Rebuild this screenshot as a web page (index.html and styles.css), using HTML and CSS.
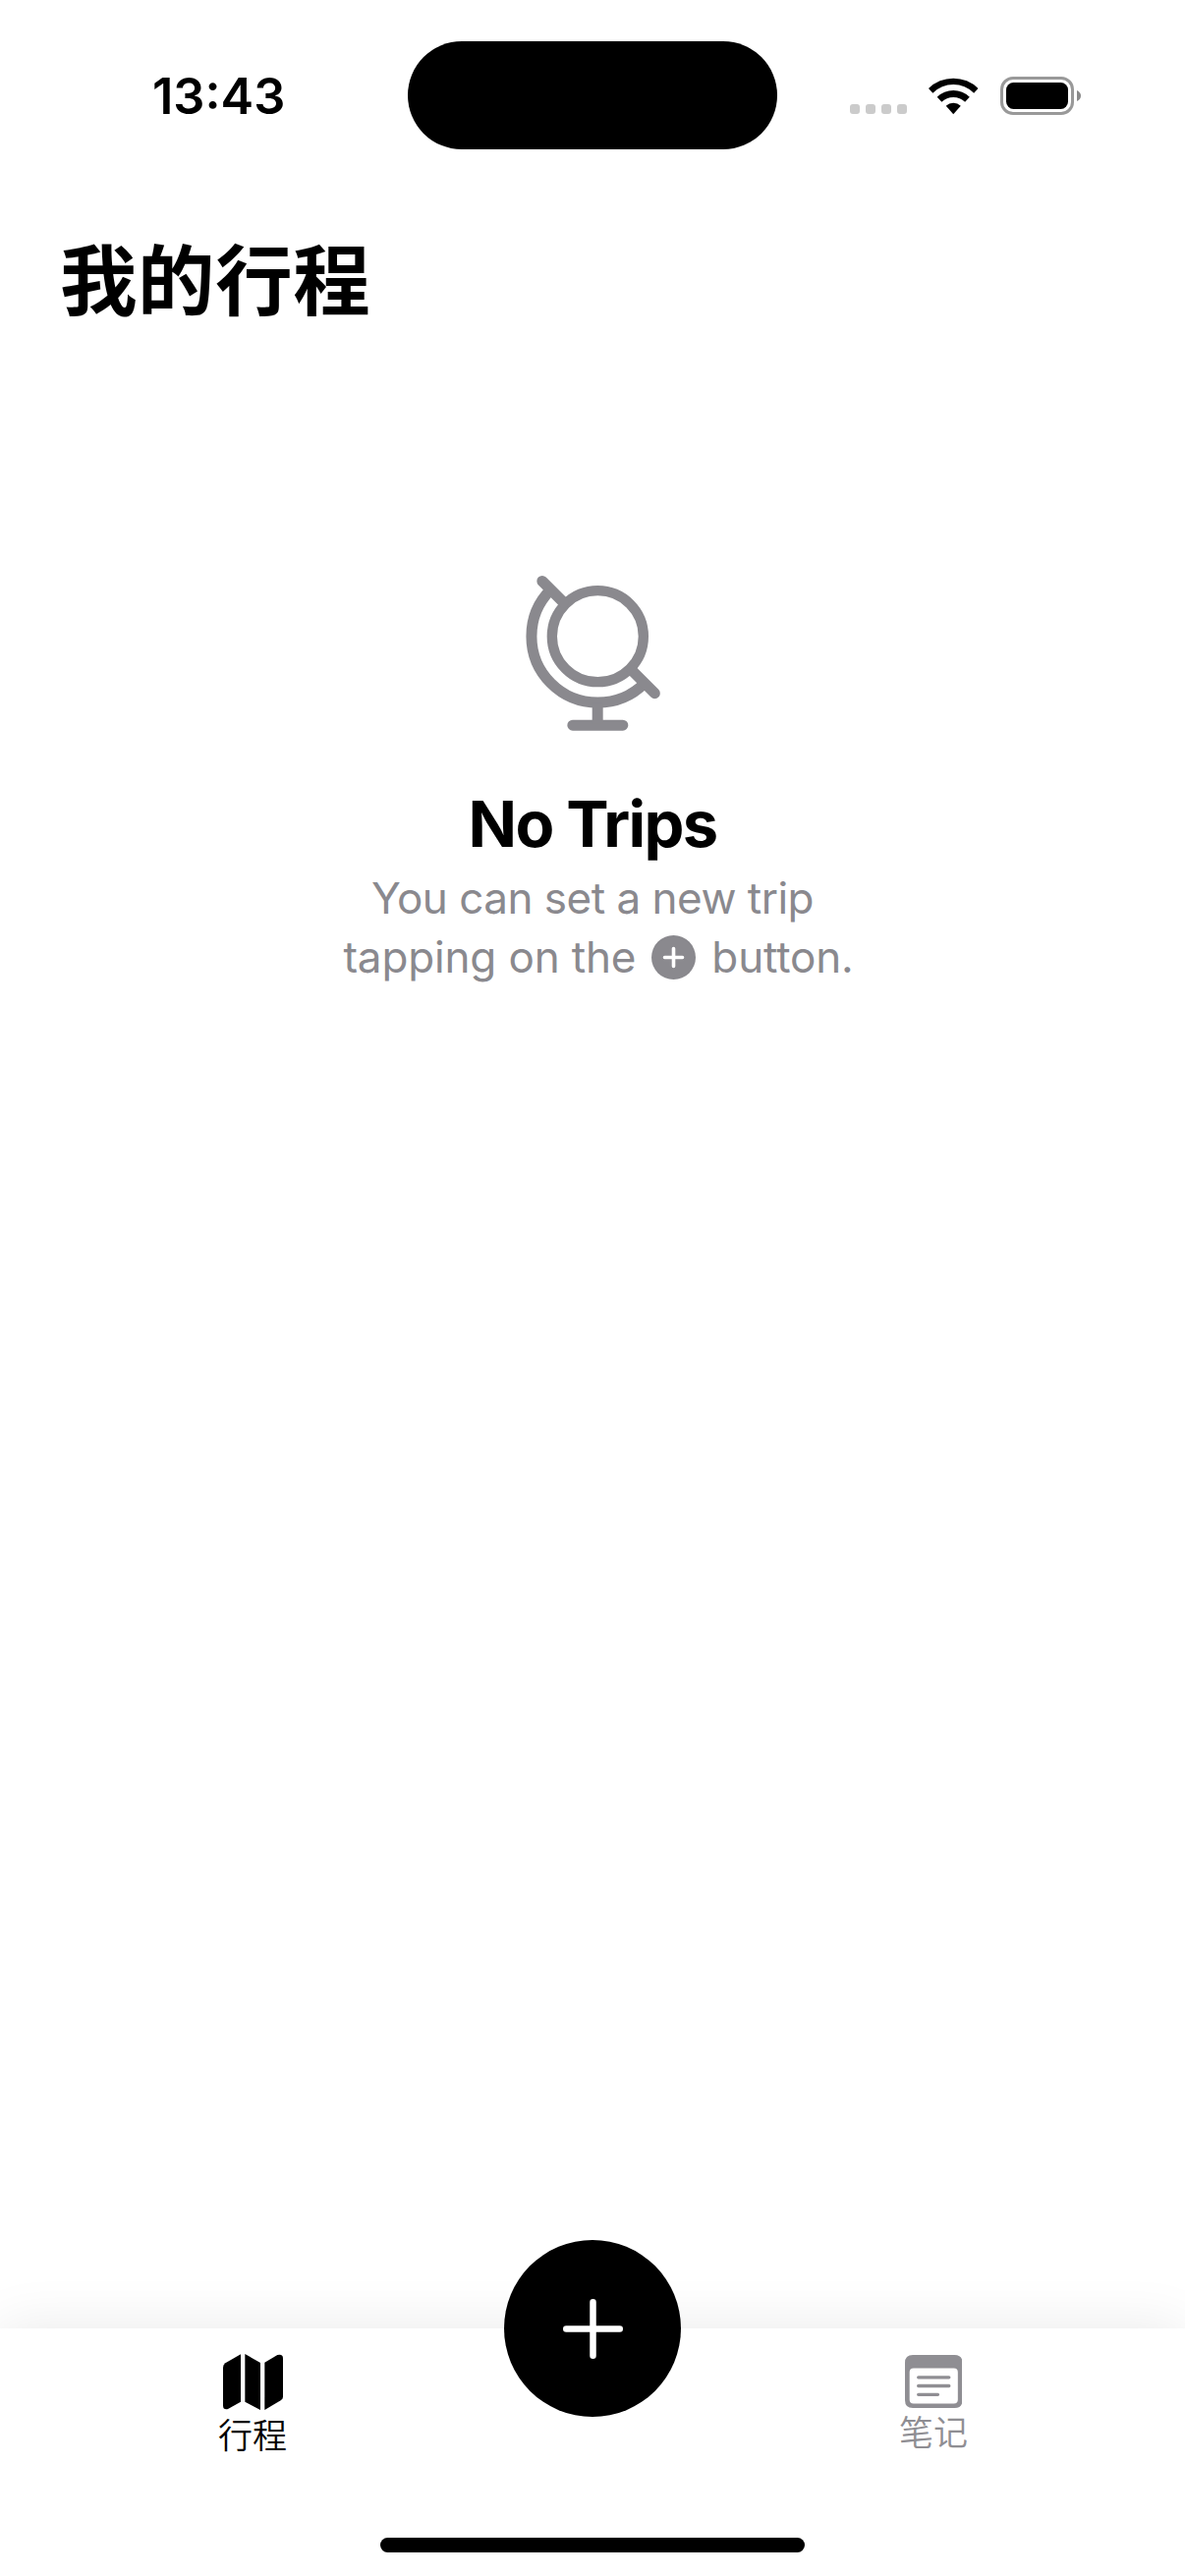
FILE: index.html
```html
<!DOCTYPE html>
<html lang="zh-CN">
<head>
<meta charset="utf-8">
<title>我的行程</title>
<link rel="stylesheet" href="styles.css">
</head>
<body>
<div class="screen">
  <header class="status">
    <div class="time">13:43</div>
    <div class="island"></div>
    <div class="indicators">
      <div class="dots"><i></i><i></i><i></i><i></i></div>
      <svg class="wifi" viewBox="496 147 151 112">
        <path d="M496 180 A107 107 0 0 1 647 180 L634 194 A88 88 0 0 0 509 194Z"/>
        <path d="M522 206 A71 71 0 0 1 621 206 L607 221 A51 51 0 0 0 536 221Z"/>
        <path d="M549 233 A33 33 0 0 1 594 233 L571.500 258Z"/>
      </svg>
      <svg class="battery" viewBox="0 0 82 39">
        <rect x="1.500" y="1.500" width="72" height="36" rx="11.500" fill="none" stroke="#999" stroke-width="3"/>
        <rect x="6" y="6" width="63" height="27" rx="7.500"/>
        <path d="M78 14 Q82 16 82 19.500 Q82 23 78 25Z" fill="#8a8a8a"/>
      </svg>
    </div>
  </header>
  <h1 class="title">我的行程</h1>
  <main class="empty">
    <svg class="globe" viewBox="75 48 411 474" fill="none" stroke="#8a898e" stroke-width="33" stroke-linecap="round">
      <circle cx="295" cy="233" r="139.500" stroke-width="31"/>
      <path d="M152 90 A202.200 202.200 0 0 0 438 376" stroke-linecap="butt"/>
      <path d="M125.500 64.500 L190 129 M400 338 L469 407 M218.500 504.500 H371.500"/>
      <path d="M294.500 436 V500" stroke-linecap="butt"/>
    </svg>
    <h2 class="heading">No Trips</h2>
    <p class="hint"><span class="line first">You can set a new trip</span><span class="line second"><span>tapping on the</span><svg class="plus-badge" viewBox="0 0 45 45"><circle cx="22.500" cy="22.500" r="22.500" fill="#8a898e"/><path d="M13.500 22.500 H31.500 M22.500 13.500 V31.500" stroke="#fff" stroke-width="3.600" stroke-linecap="round"/></svg><span>button.</span></span></p>
  </main>
  <nav class="tabs">
    <div class="tab active">
      <svg class="map" viewBox="111 137 183 171">
        <path d="M165 138 V283 L126 305 Q111 308 111 295 V178 Q111 170 118 165Z"/>
        <path d="M178 137 L225 164 V308 L178 283Z"/>
        <path d="M238 163 L277 140 Q294 136 294 150 V268 Q294 274 287 279 L238 308Z"/>
      </svg>
      <span>行程</span>
    </div>
    <button class="add" aria-label="Add">
      <svg viewBox="0 0 61 61"><path d="M3.250 30.500 H57.750 M30.500 3.250 V57.750" stroke="#fff" stroke-width="6.500" stroke-linecap="round"/></svg>
    </button>
    <div class="tab">
      <svg class="note" viewBox="93 141 175 161">
        <path fill="#8f8e93" fill-rule="evenodd" d="M117 141 H244 Q268 141 268 165 V278 Q268 302 244 302 H117 Q93 302 93 278 V165 Q93 141 117 141Z M119 181 Q107 181 107 193 V277 Q107 289 119 289 H242 Q254 289 254 277 V193 Q254 181 242 181Z"/>
        <path d="M134 209 H227 M134 235 H227 M134 261.500 H193" stroke="#8f8e93" stroke-width="10" stroke-linecap="round"/>
      </svg>
      <span>笔记</span>
    </div>
  </nav>
  <div class="home"></div>
</div>
</body>
</html>
```
FILE: styles.css
```css
* { box-sizing: border-box; }

body {
  margin: 0;
  background: #fff;
  color: #000;
  font-family: Inter, "Noto Sans CJK SC", sans-serif;
}

svg { display: block; flex: none; }

.screen {
  width: 1206px;
  height: 2622px;
  display: flex;
  flex-direction: column;
  overflow: hidden;
}

.status {
  height: 196px;
  padding: 42px 106px 0 155px;
  display: grid;
  grid-template-columns: 260px 376px 1fr;
  flex: none;
}

.time {
  height: 110px;
  line-height: 112px;
  font-size: 50.500px;
  font-weight: 600;
}

.island {
  height: 110px;
  border-radius: 55px;
  background: #000;
}

.indicators {
  display: flex;
  justify-content: flex-end;
  padding-top: 36px;
}

.dots { display: flex; gap: 6px; padding-top: 28px; }
.dots i { width: 10px; height: 10px; border-radius: 3px; background: #cbcbcb; }
.wifi { width: 50.500px; height: 37.500px; margin: 1px 22.500px 0 22px; }
.battery { width: 82px; height: 39px; }

.title {
  margin: 0 0 0 61px;
  height: 182px;
  line-height: 182px;
  font-size: 78.500px;
  font-weight: 700;
  letter-spacing: 0.600px;
}

.empty {
  flex: 1;
  padding-top: 208px;
  display: flex;
  flex-direction: column;
  align-items: center;
}

.globe { width: 137px; height: 158px; }

.heading {
  margin: 55px 0 0;
  line-height: 80px;
  font-size: 65px;
  font-weight: 700;
  letter-spacing: -1.700px;
}

.hint {
  margin: 5px 0 0;
  color: #8a898e;
  font-size: 44px;
  line-height: 60px;
}

.line { display: flex; justify-content: center; align-items: center; }
.first { letter-spacing: -0.500px; }
.second { padding-left: 12px; letter-spacing: -0.150px; }
.plus-badge { width: 45px; height: 45px; margin: 0 16px; }

.tabs {
  height: 176px;
  display: grid;
  grid-template-columns: repeat(3, 346.500px);
  justify-content: center;
  background: #fff;
  box-shadow: 0 0 54px rgba(0, 0, 0, 0.09);
  clip-path: inset(-100px 0 0 0);
}

.tab {
  display: flex;
  flex-direction: column;
  align-items: center;
  padding: 27px 0 0 1px;
  color: #8f8e93;
  font-size: 35px;
  font-weight: 350;
  line-height: 51px;
}

.active { color: #000; padding-top: 26px; }
.map { width: 61px; height: 57px; margin-bottom: 1px; }
.note { width: 58.500px; height: 54px; }

.add {
  width: 180px;
  height: 180px;
  margin: -90px auto 0;
  padding: 0;
  border: 0;
  border-radius: 50%;
  background: #000;
  display: grid;
  place-items: center;
}

.add svg { width: 61px; height: 61px; }

.home {
  width: 432px;
  height: 15px;
  margin: 37px auto 24px;
  border-radius: 8px;
  background: #000;
  flex: none;
}
```
